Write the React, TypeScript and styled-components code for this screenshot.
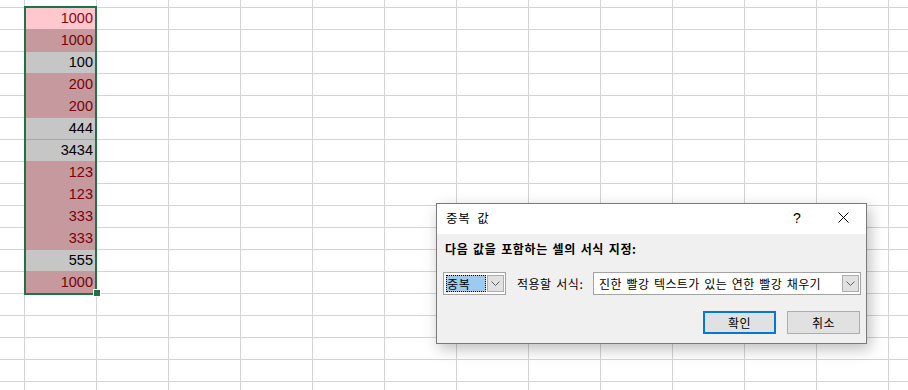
import React from "react";
import styled, { createGlobalStyle } from "styled-components";

const GlobalStyle = createGlobalStyle`
  html, body { margin: 0; padding: 0; background: #fff; overflow: hidden; }
  * { box-sizing: border-box; }
`;

const GRID = "#d4d4d4";

const Page = styled.div`
  position: relative;
  width: 908px;
  height: 390px;
  overflow: hidden;
  background: #fff;
`;

const Sheet = styled.div`
  display: flex;
  flex-direction: column;
  font-family: "Liberation Sans", Arial, sans-serif;
  font-size: 14.5px;
`;

const Row = styled.div<{ $h: number }>`
  display: flex;
  height: ${(p) => p.$h}px;
  flex: none;
`;

const Cell = styled.div<{ $w: number; $bg?: string; $color?: string; $bb?: string }>`
  flex: none;
  width: ${(p) => p.$w}px;
  height: 100%;
  border-right: 1px solid ${GRID};
  border-bottom: 1px solid ${(p) => p.$bb || GRID};
  background: ${(p) => p.$bg || "transparent"};
  color: ${(p) => p.$color || "#000"};
  text-align: right;
  padding-right: 3px;
  line-height: 21px;
  white-space: nowrap;
`;

const Selection = styled.div`
  position: absolute;
  left: 24px;
  top: 6px;
  width: 73px;
  height: 289px;
  border: 2px solid #217346;
  pointer-events: none;
`;

const FillHandle = styled.div`
  position: absolute;
  left: 93px;
  top: 289px;
  width: 8px;
  height: 8px;
  background: #217346;
  border: 1px solid #fff;
`;

const Dialog = styled.div`
  position: absolute;
  left: 436px;
  top: 203px;
  width: 431px;
  height: 141px;
  border: 1px solid #7a7a7a;
  background: #f0f0f0;
  box-shadow: 3px 5px 14px rgba(0, 0, 0, 0.26);
  display: flex;
  flex-direction: column;
  font-family: "Noto Sans CJK KR", "Noto Sans", sans-serif;
  font-size: 12px;
  word-spacing: 1.5px;
  color: #000;
`;

const TitleBar = styled.div`
  height: 30px;
  flex: none;
  background: #fff;
  display: flex;
  align-items: center;
`;

const Title = styled.div`
  flex: 1;
  padding-left: 9px;
  padding-bottom: 4px;
  font-size: 12.5px;
  letter-spacing: 0.8px;
  word-spacing: 3px;
`;

const TitleButton = styled.div`
  width: 46px;
  height: 30px;
  display: flex;
  align-items: center;
  justify-content: center;
  padding-bottom: 3px;
  font-family: "Liberation Sans", Arial, sans-serif;
  font-size: 14px;
`;

const Body = styled.div`
  flex: 1;
  display: flex;
  flex-direction: column;
  padding: 6px 5px 9px 6px;
`;

const Instruction = styled.div`
  font-weight: bold;
  line-height: 18px;
  height: 18px;
  padding-left: 2px;
  letter-spacing: 0.6px;
`;

const FormRow = styled.div`
  margin-top: 14px;
  height: 23px;
  display: flex;
  align-items: center;
`;

const Combo = styled.div<{ $w?: number }>`
  ${(p) => (p.$w ? `width: ${p.$w}px; flex: none;` : "flex: 1;")}
  height: 23px;
  border: 1px solid #a3a3a3;
  background: #fff;
  padding: 1px;
  display: flex;
  align-items: stretch;
`;

const ComboValue = styled.div<{ $selected?: boolean }>`
  flex: 1;
  display: flex;
  align-items: center;
  padding-left: ${(p) => (p.$selected ? "1px" : "4px")};
  padding-bottom: 1px;
  white-space: pre;
  overflow: hidden;
  letter-spacing: 0.4px;
  ${(p) =>
    p.$selected
      ? `background: #9ccbf1; outline: 1px dotted #000; outline-offset: -1px; margin: 1px; letter-spacing: 0.6px;`
      : ""}
`;

const DropButton = styled.div`
  width: 17px;
  flex: none;
  margin: 1px 0 1px 0;
  border: 1px solid #adadad;
  background: #e1e1e1;
  display: flex;
  align-items: center;
  justify-content: center;
`;

const FieldLabel = styled.div`
  width: 76px;
  flex: none;
  margin-left: 11px;
  line-height: 23px;
  padding-bottom: 1px;
  white-space: nowrap;
  letter-spacing: 0.5px;
`;

const ButtonRow = styled.div`
  margin-top: 16px;
  display: flex;
  justify-content: flex-end;
  gap: 11px;
  padding-right: 1px;
`;

const Button = styled.div<{ $primary?: boolean }>`
  width: 73px;
  height: 23px;
  background: #e1e1e1;
  border: ${(p) => (p.$primary ? "2px solid #0078d7" : "1px solid #adadad")};
  display: flex;
  align-items: center;
  justify-content: center;
  padding-bottom: 1px;
  letter-spacing: 0.5px;
`;

const Chevron = () => (
  <svg width="9" height="5" viewBox="0 0 9 5">
    <polyline points="0.5,0.5 4.5,4.5 8.5,0.5" fill="none" stroke="#606060" strokeWidth="1" />
  </svg>
);

const CloseIcon = () => (
  <svg width="11" height="11" viewBox="0 0 11 11">
    <line x1="0.5" y1="0.5" x2="10.5" y2="10.5" stroke="#000" strokeWidth="1" />
    <line x1="10.5" y1="0.5" x2="0.5" y2="10.5" stroke="#000" strokeWidth="1" />
  </svg>
);

type Val = { v: string; dup: boolean };
const values: Val[] = [
  { v: "1000", dup: true },
  { v: "1000", dup: true },
  { v: "100", dup: false },
  { v: "200", dup: true },
  { v: "200", dup: true },
  { v: "444", dup: false },
  { v: "3434", dup: false },
  { v: "123", dup: true },
  { v: "123", dup: true },
  { v: "333", dup: true },
  { v: "333", dup: true },
  { v: "555", dup: false },
  { v: "1000", dup: true },
];

const COLS = 13;
const ROWS = 18;

function cellStyle(i: number): { bg?: string; color?: string; bb?: string } {
  const item = values[i];
  if (!item) return {};
  const bgOf = (k: number) => {
    const it = values[k];
    if (!it) return undefined;
    if (k === 0) return "#ffc7ce";
    return it.dup ? "#c5999d" : "#c6c6c6";
  };
  const bg = bgOf(i);
  const color = i === 0 ? "#9c0006" : item.dup ? "#7c0006" : "#000";
  const next = values[i + 1];
  let bb: string | undefined;
  if (next && next.dup) bb = bgOf(i + 1);
  else if (item.dup) bb = bg;
  else if (next && !next.dup) bb = "#a8a8a8";
  else bb = bg;
  return { bg, color, bb };
}

export default function App() {
  const rows = [];
  rows.push(
    <Row key="top" $h={8}>
      {Array.from({ length: COLS + 1 }).map((_, c) => (
        <Cell key={c} $w={c === 0 ? 25 : 72} />
      ))}
    </Row>
  );
  for (let r = 0; r < ROWS; r++) {
    const s = cellStyle(r);
    rows.push(
      <Row key={r} $h={22}>
        {Array.from({ length: COLS + 1 }).map((_, c) =>
          c === 1 && values[r] ? (
            <Cell key={c} $w={72} $bg={s.bg} $color={s.color} $bb={s.bb}>
              {values[r].v}
            </Cell>
          ) : (
            <Cell key={c} $w={c === 0 ? 25 : 72} />
          )
        )}
      </Row>
    );
  }

  return (
    <Page>
      <GlobalStyle />
      <Sheet>{rows}</Sheet>
      <Selection />
      <FillHandle />
      <Dialog>
        <TitleBar>
          <Title>중복 값</Title>
          <TitleButton>?</TitleButton>
          <TitleButton>
            <CloseIcon />
          </TitleButton>
        </TitleBar>
        <Body>
          <Instruction>다음 값을 포함하는 셀의 서식 지정:</Instruction>
          <FormRow>
            <Combo $w={63}>
              <ComboValue $selected>중복</ComboValue>
              <DropButton>
                <Chevron />
              </DropButton>
            </Combo>
            <FieldLabel>적용할 서식:</FieldLabel>
            <Combo>
              <ComboValue>진한 빨강 텍스트가 있는 연한 빨강 채우기</ComboValue>
              <DropButton>
                <Chevron />
              </DropButton>
            </Combo>
          </FormRow>
          <ButtonRow>
            <Button $primary>확인</Button>
            <Button>취소</Button>
          </ButtonRow>
        </Body>
      </Dialog>
    </Page>
  );
}
